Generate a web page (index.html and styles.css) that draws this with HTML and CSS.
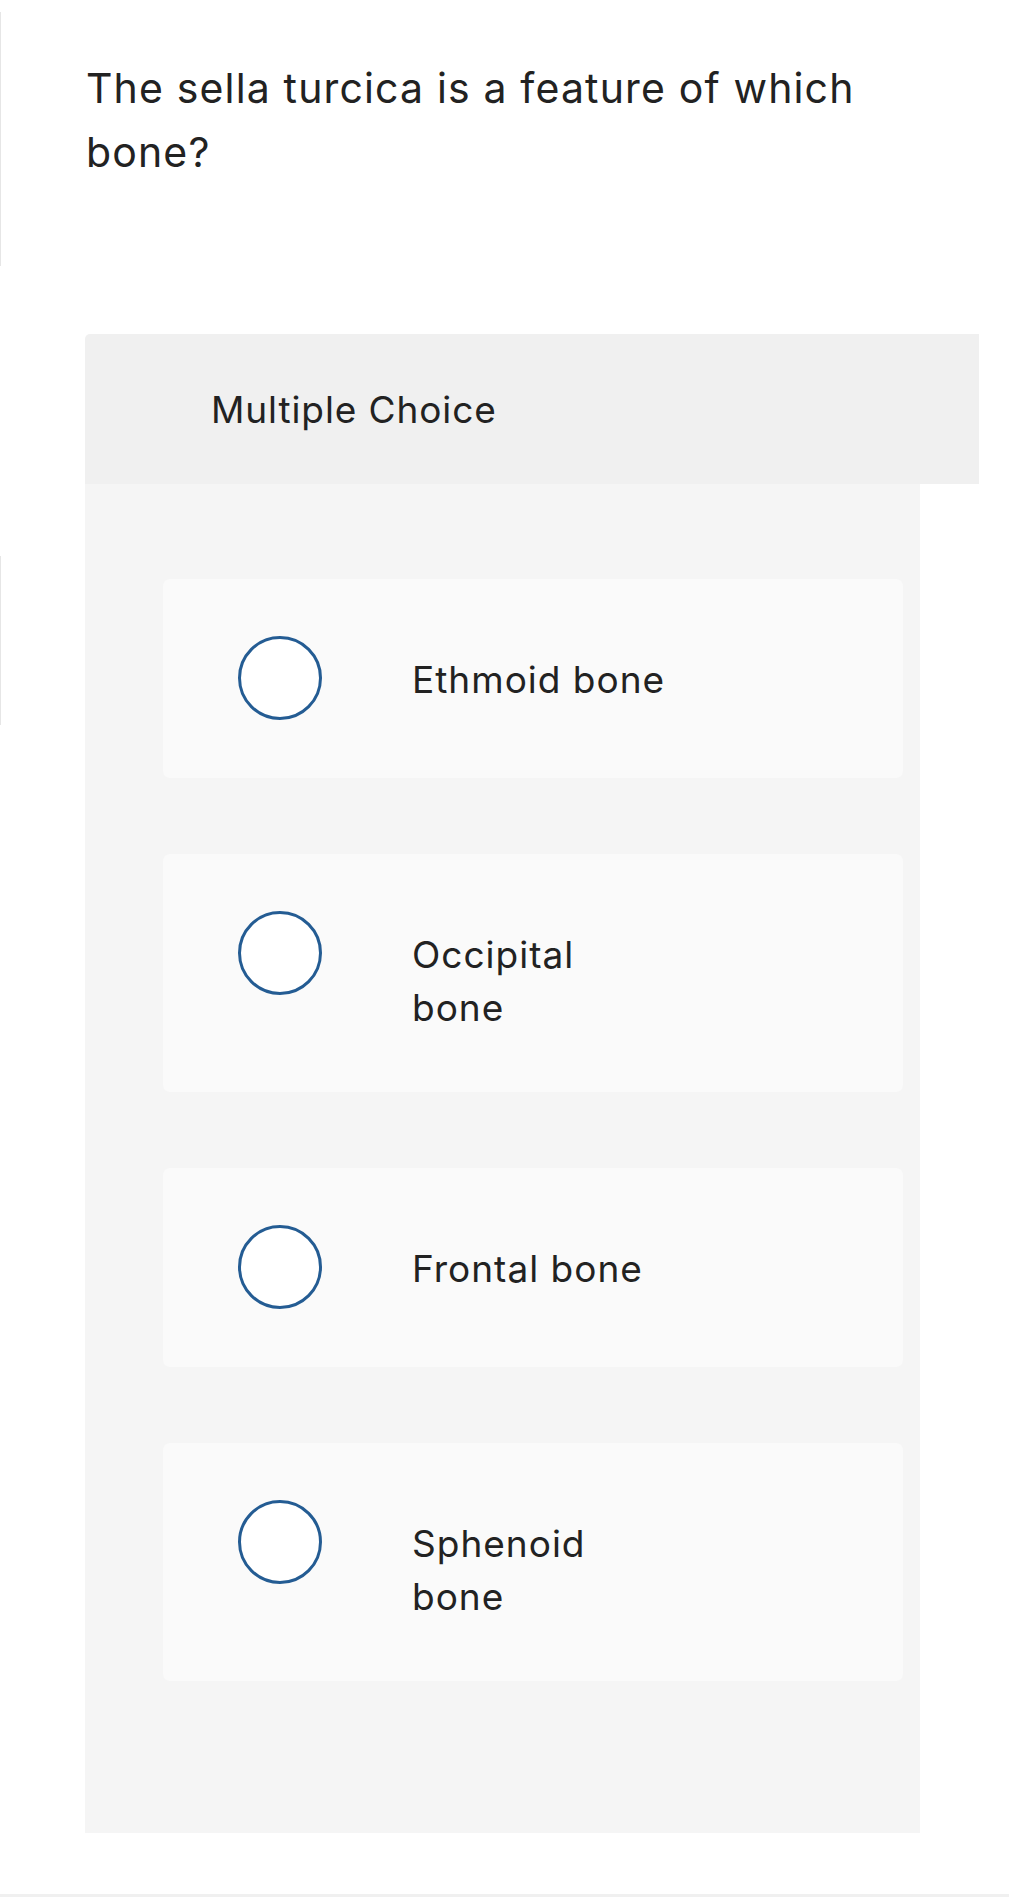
FILE: index.html
```html
<!DOCTYPE html>
<html lang="en">
<head>
<meta charset="utf-8">
<title>Question</title>
<link rel="stylesheet" href="styles.css">
</head>
<body>
<div class="page">
  <section class="question">
    <p class="question-text">The sella turcica is a feature of which bone?</p>
  </section>

  <section class="answer">
    <span class="rail" aria-hidden="true"></span>
    <header class="answer-head">Multiple Choice</header>
    <div class="answer-body">
      <label class="choice">
        <span class="radio"></span>
        <span class="choice-text">Ethmoid bone</span>
      </label>
      <label class="choice">
        <span class="radio"></span>
        <span class="choice-text">Occipital bone</span>
      </label>
      <label class="choice">
        <span class="radio"></span>
        <span class="choice-text">Frontal bone</span>
      </label>
      <label class="choice">
        <span class="radio"></span>
        <span class="choice-text">Sphenoid bone</span>
      </label>
    </div>
  </section>

  <footer class="page-foot"></footer>
</div>
</body>
</html>
```
FILE: styles.css
```css
* { box-sizing: border-box; }

html, body {
  margin: 0;
  padding: 0;
  background: #ffffff;
}

body {
  font-family: "Inter", "Open Sans", sans-serif;
  color: #222222;
}

.page {
  display: flex;
  flex-direction: column;
  min-height: 1899px;
}

.question {
  margin-top: 12px;
  border-left: 1px solid #e6e6e6;
  padding: 44px 0 82px 85px;
}

.question-text {
  margin: 0;
  max-width: 800px;
  font-size: 41px;
  line-height: 64px;
  letter-spacing: 1.15px;
  font-weight: 400;
}

.answer {
  position: relative;
  margin-top: 68px;
  margin-left: 85px;
  display: flex;
  flex-direction: column;
}

.rail {
  position: absolute;
  left: -85px;
  top: 222px;
  width: 1px;
  height: 169px;
  background: #e6e6e6;
}

.answer-head {
  width: 894px;
  height: 150px;
  background: #f0f0f0;
  border-top-left-radius: 5px;
  padding: 49px 0 0 126px;
  font-size: 37px;
  line-height: 53px;
  letter-spacing: 0.9px;
}

.answer-body {
  width: 835px;
  background: #f5f5f5;
  padding: 95px 17px 152px 78px;
  display: flex;
  flex-direction: column;
  gap: 76px;
}

.choice {
  display: flex;
  align-items: flex-start;
  background: #fafafa;
  border-radius: 7px;
  padding: 57px 20px 58px 75px;
  cursor: pointer;
}

.radio {
  flex: none;
  width: 84px;
  height: 84px;
  border-radius: 50%;
  border: 3px solid #245c93;
  background: #ffffff;
}

.choice-text {
  margin-left: 90px;
  padding-top: 17px;
  width: 262px;
  font-size: 37px;
  line-height: 53px;
  letter-spacing: 1px;
}

.page-foot {
  margin-top: auto;
  margin-bottom: 2px;
  height: 3px;
  background: #f0f0f0;
}
```
